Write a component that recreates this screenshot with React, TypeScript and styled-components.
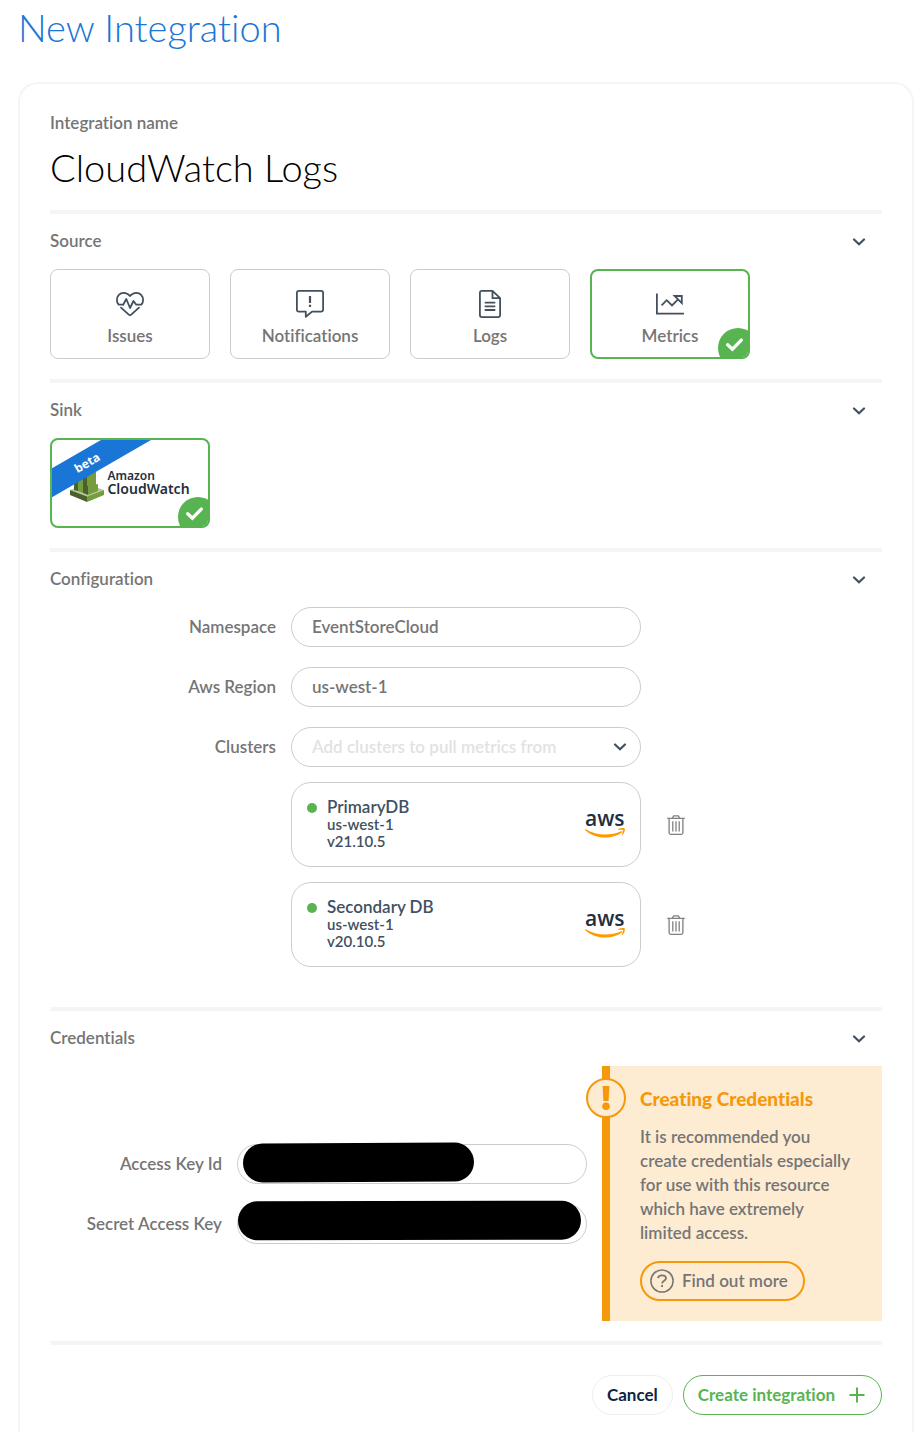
import React, { useState } from "react";
import styled, { createGlobalStyle, css } from "styled-components";

const color = {
  text: "#757575",
  slate: "#42505f",
  navy: "#0d2344",
  blue: "#1a76d6",
  green: "#57b451",
  orange: "#f5980b",
  cream: "#feecd2",
  line: "#cccccc",
  faint: "#f5f5f5",
};

const GlobalStyle = createGlobalStyle`
  *, *::before, *::after { box-sizing: border-box; }
  body {
    margin: 0;
    background: #fff;
    color: ${color.text};
    font: 600 17px/24px Lato, "Open Sans", sans-serif;
    font-variant-ligatures: none;
  }
  button, input, select { font: inherit; font-variant-ligatures: none; color: inherit; margin: 0; }
  svg { display: block; flex: none; }
`;

const Page = styled.main`
  padding: 0 4px 0 18px;
`;

const PageTitle = styled.h1`
  margin: 0 0 28px;
  color: ${color.blue};
  font-size: 38px;
  font-weight: 300;
  line-height: 54px;
`;

const Panel = styled.form`
  padding: 27px 30px 17px;
  border: 2px solid ${color.faint};
  border-bottom: 0;
  border-radius: 20px 20px 0 0;
`;

const NameField = styled.label`
  display: flex;
  flex-direction: column;
`;

const NameInput = styled.input`
  width: 100%;
  height: 64px;
  margin-bottom: 11px;
  padding: 0;
  border: 0;
  outline: 0;
  background: none;
  && { color: #000; font-size: 38px; font-weight: 300; }
`;

const SectionBox = styled.section`
  padding-bottom: 20px;
  border-top: 4px solid ${color.faint};
`;

const SectionHeader = styled.header`
  display: flex;
  align-items: center;
  justify-content: space-between;
  height: 55px;
`;

const SectionTitle = styled.h2`
  margin: 0;
  padding-bottom: 2px;
  font-size: 17px;
  font-weight: 600;
  line-height: 24px;
`;

const Toggle = styled.button`
  padding: 8px 16px;
  border: 0;
  background: none;
  color: ${color.slate};
`;

const Tiles = styled.div`
  display: flex;
  flex-wrap: wrap;
  gap: 20px;
`;

const Tile = styled.button<{ $selected?: boolean }>`
  position: relative;
  display: flex;
  flex-direction: column;
  align-items: center;
  gap: 6px;
  width: 160px;
  height: 90px;
  padding: 20px 0 0;
  overflow: hidden;
  border: 1px solid ${color.line};
  border-radius: 8px;
  background: #fff;
  ${(p) =>
    p.$selected &&
    css`
      padding-top: 19px;
      border: 2px solid ${color.green};
    `}
  svg { color: ${color.slate}; }
`;

const Badge = styled.span`
  position: absolute;
  right: -10px;
  bottom: -11px;
  width: 40px;
  height: 40px;
  padding: 10px 8px;
  border-radius: 50%;
  background: ${color.green};
  && svg { color: #fff; }
`;

const Ribbon = styled.span`
  position: absolute;
  top: 10px;
  left: -45px;
  width: 160px;
  height: 25px;
  background: ${color.blue};
  color: #fff;
  font: 700 12px/25px "Noto Sans", sans-serif;
  text-align: center;
  transform: rotate(-30deg);
`;

const Brand = styled.span`
  display: flex;
  align-items: center;
  gap: 3px;
  margin-top: 5px;
`;

const BrandName = styled.span`
  display: flex;
  flex-direction: column;
  color: #232f3e;
  font: 600 14px/14px "Noto Sans", sans-serif;
  text-align: left;
`;

const BrandSmall = styled.span`
  font-size: 12px;
  line-height: 12px;
`;

const FormGrid = styled.div`
  display: grid;
  grid-template-columns: 1fr 350px 1fr;
  column-gap: 15px;
  row-gap: 20px;
  align-items: center;
  padding-bottom: 20px;
`;

const FieldLabel = styled.label`
  grid-column: 1;
  text-align: right;
`;

const pill = css`
  width: 100%;
  height: 40px;
  padding: 0 20px;
  border: 1px solid ${color.line};
  border-radius: 20px;
  outline: 0;
  background: #fff;
`;

const TextInput = styled.input`
  ${pill}
  padding-bottom: 1px;
`;

const SelectWrap = styled.div`
  position: relative;
  color: ${color.slate};
  svg {
    position: absolute;
    top: 16px;
    right: 14px;
    pointer-events: none;
  }
`;

const SelectInput = styled.select`
  ${pill}
  appearance: none;
  && { color: #e2e2e2; }
`;

const ClusterList = styled.ul`
  display: flex;
  flex-direction: column;
  grid-column: 2 / 4;
  gap: 15px;
  margin: -5px 0 0;
  padding: 0;
  list-style: none;
`;

const ClusterRow = styled.li`
  display: flex;
  align-items: center;
  gap: 18px;
`;

const ClusterCard = styled.div`
  display: flex;
  flex: none;
  gap: 10px;
  width: 350px;
  padding: 14px 15px 16px;
  border: 1px solid ${color.line};
  border-radius: 20px;
  color: ${color.slate};
`;

const Dot = styled.span`
  flex: none;
  width: 10px;
  height: 10px;
  margin-top: 6px;
  border-radius: 50%;
  background: ${color.green};
`;

const ClusterInfo = styled.div`
  display: flex;
  flex: 1;
  flex-direction: column;
  font-size: 15px;
  font-weight: 600;
  line-height: 17px;
`;

const ClusterName = styled.span`
  font-size: 17px;
  font-weight: 600;
  line-height: 19px;
`;

const AwsBox = styled.span`
  height: 42px;
  margin-top: 5px;
`;

const IconButton = styled.button`
  padding: 8px;
  border: 0;
  background: none;
  color: #808080;
`;

const CredentialsRow = styled.div`
  display: flex;
  align-items: center;
  gap: 15px;
`;

const CredentialsGrid = styled.div`
  display: grid;
  flex: 1;
  grid-template-columns: 1fr 350px;
  gap: 20px 15px;
  align-items: center;
`;

const SecretField = styled.div`
  position: relative;
  height: 40px;
`;

const Redaction = styled.span<{ $left: number; $top: number; $right: number; $tilt: number }>`
  position: absolute;
  top: ${(p) => p.$top}px;
  left: ${(p) => p.$left}px;
  right: ${(p) => p.$right}px;
  height: 39px;
  border-radius: 20px;
  background: #000;
  transform: rotate(-${(p) => p.$tilt}deg);
`;

const Notice = styled.aside`
  position: relative;
  width: 280px;
  padding: 20px 30px;
  border-left: 8px solid ${color.orange};
  background: ${color.cream};
`;

const NoticeMark = styled.span`
  position: absolute;
  top: 12px;
  left: -24px;
`;

const NoticeTitle = styled.h3`
  margin: 0 0 13px;
  color: ${color.orange};
  font-size: 19px;
  font-weight: 900;
  line-height: 26px;
`;

const NoticeText = styled.p`
  margin: 0 -6px 16px 0;
`;

const HelpLink = styled.a`
  display: inline-flex;
  align-items: center;
  gap: 8px;
  height: 40px;
  padding: 0 15px 0 8px;
  border: 2px solid ${color.orange};
  border-radius: 20px;
  color: ${color.text};
  text-decoration: none;
  vertical-align: top;
`;

const Footer = styled.footer`
  display: flex;
  justify-content: flex-end;
  gap: 10px;
  padding-top: 30px;
  border-top: 4px solid ${color.faint};
`;

const Action = styled.button<{ $primary?: boolean }>`
  display: flex;
  align-items: center;
  gap: 14px;
  height: 40px;
  padding: 0 ${(p) => (p.$primary ? 16 : 14)}px 0 14px;
  border: 1px solid ${(p) => (p.$primary ? color.green : "#eeeeee")};
  border-radius: 20px;
  background: #fff;
  && {
    color: ${(p) => (p.$primary ? color.green : color.navy)};
    font-weight: 700;
  }
`;

const stroke = { fill: "none", stroke: "currentColor", strokeWidth: 1.8 } as const;

const Chevron = () => (
  <svg width="14" height="8" viewBox="0 0 14 8" aria-hidden="true">
    <path d="M2 1.5 7 6.3 12 1.5" {...stroke} strokeWidth="2.2" strokeLinecap="round" />
  </svg>
);

const HeartIcon = () => (
  <svg width="28" height="28" viewBox="0 0 28 28" {...stroke} strokeLinejoin="round" strokeLinecap="round">
    <path d="M7.2 14.7H2.6C1.4 13.4.9 11.6.9 10 .9 6 3.9 2.8 7.5 2.8c2.7 0 4.9 1 6.5 3.2 1.6-2.2 3.8-3.2 6.5-3.2 3.6 0 6.6 3.2 6.6 7.2 0 1.6-.5 3.4-1.7 4.7H20.3L17.5 11 14 18 10.3 9 7.2 14.7" />
    <path d="M5 17.6 12.8 24.7Q14 25.8 15.2 24.7L23 17.6" />
  </svg>
);

const NoticeIcon = () => (
  <svg width="28" height="28" viewBox="0 0 28 28" {...stroke} strokeLinejoin="round">
    <path d="M3 .9H25Q27.1 .9 27.1 3V19.5Q27.1 21.6 25 21.6H16L9.8 26.8V21.6H3Q.9 21.6 .9 19.5V3Q.9.9 3 .9Z" />
    <path d="M14 6V13M14 14.8V17" strokeWidth="2.2" />
  </svg>
);

const FileIcon = () => (
  <svg width="22" height="28" viewBox="0 0 22 28" {...stroke} strokeLinejoin="round">
    <path d="M13.5.9H3Q.9.9.9 3V25Q.9 27.1 3 27.1H19Q21.1 27.1 21.1 25V8.2L13.5.9V8.2H21.1M5.7 12.7H16.3M5.7 16.3H16.3M5.7 20H16.3" />
  </svg>
);

const ChartIcon = () => (
  <svg width="28" height="28" viewBox="0 0 28 28" {...stroke}>
    <path d="M.9 3.4V23.7H28M5.6 15.3 10.7 10.2 16 15.5 22.3 9.2M18.6 6H25.8V13.2Z" />
  </svg>
);

const Tick = () => (
  <svg width="18" height="14" viewBox="0 0 18 14" aria-hidden="true">
    <path d="M1.7 6.7 6.4 11.1 15.3 2.1" {...stroke} strokeWidth="3.3" strokeLinecap="round" />
  </svg>
);

const CloudWatchMark = () => (
  <svg width="34" height="38" viewBox="0 0 34 38" aria-hidden="true">
    <path d="M0 26 17 20 34 26 17 33Z" fill="#b7ca9d" />
    <path d="M0 26 17 32.5V38L0 31Z" fill="#4b612c" />
    <path d="M34 26 17 32.5V38L34 31Z" fill="#759c3e" />
    <path d="M13 8 19 6V30L13 28Z" fill="#4b612c" />
    <path d="M17 6 26 8V26L17 29Z" fill="#759c3e" />
    <path d="M4 18 8 16V27L4 26Z" fill="#4b612c" />
    <path d="M8 14 13 15V29L8 27Z" fill="#759c3e" />
    <path d="M13 21 18 22V31L13 29Z" fill="#4b612c" />
    <path d="M18 22 28 20V27L18 31Z" fill="#759c3e" />
  </svg>
);

const AwsLogo = () => (
  <svg width="40" height="42" viewBox="0 -7 40 42" overflow="visible" role="img" aria-label="aws">
    <text x="0" y="17" fill="#232f3e" fontFamily="Open Sans, sans-serif" fontSize="21" fontWeight="600">
      aws
    </text>
    <path d="M.6 20.2C11 26.500 24.500 27.300 36.200 22.300 37.300 21.900 37.900 22.800 36.900 23.600 26.500 31 10 30.200.3 21.200-.2 20.600.1 19.900.6 20.200Z" fill="#f90" />
    <path d="M33 20.400C35.400 18.600 39.200 18.800 39.700 19.400 40.200 20.200 39.500 24.100 37.500 26 37.100 26.300 36.800 26.100 36.900 25.700 37.500 24.300 38.300 21.900 37.900 21.100 37.500 20.400 34.900 20.700 33.500 20.900 33 21 32.800 20.700 33 20.400Z" fill="#f90" />
  </svg>
);

const TrashIcon = () => (
  <svg width="18" height="20" viewBox="0 0 18 20" {...stroke} strokeWidth="1.3" aria-hidden="true">
    <path d="M.2 3.3H17.8M5.3 3.1 6.7.9H11.3L12.7 3.1M2.1 3.5V17.8Q2.1 19.3 3.6 19.3H14.4Q15.9 19.3 15.9 17.8V3.5M5.8 6.3V16.6M9 6.3V16.6M12.2 6.3V16.6" />
  </svg>
);

const AlertIcon = () => (
  <svg width="40" height="40" viewBox="0 0 40 40" aria-hidden="true">
    <circle cx="20" cy="20" r="19" fill={color.cream} stroke={color.orange} strokeWidth="2" />
    <path d="M16.6 8H23.4L22.6 23H17.4Z" fill={color.orange} />
    <circle cx="20" cy="28.3" r="3.8" fill={color.orange} />
  </svg>
);

const HelpIcon = () => (
  <svg width="24" height="24" viewBox="0 0 24 24" {...stroke} aria-hidden="true">
    <circle cx="12" cy="12" r="11.1" strokeWidth="1.5" />
    <path d="M8 9.2C8.2 7.4 9.7 6.3 12 6.3 14.4 6.3 16 7.5 16 9.3 16 11.8 12.1 11.7 12.1 14.6M12.1 16V18" />
  </svg>
);

const PlusIcon = () => (
  <svg width="16" height="16" viewBox="0 0 16 16" aria-hidden="true">
    <path d="M8 .5V15.5M.5 8H15.5" {...stroke} strokeWidth="2" />
  </svg>
);

const sources = [
  { name: "Issues", Icon: HeartIcon },
  { name: "Notifications", Icon: NoticeIcon },
  { name: "Logs", Icon: FileIcon },
  { name: "Metrics", Icon: ChartIcon },
];

const clusters = [
  { name: "PrimaryDB", region: "us-west-1", version: "v21.10.5" },
  { name: "Secondary DB", region: "us-west-1", version: "v20.10.5" },
];

function Section({ title, children }: { title: string; children: React.ReactNode }) {
  const [open, setOpen] = useState(true);
  return (
    <SectionBox>
      <SectionHeader>
        <SectionTitle>{title}</SectionTitle>
        <Toggle type="button" aria-label={`Toggle ${title}`} aria-expanded={open} onClick={() => setOpen(!open)}>
          <Chevron />
        </Toggle>
      </SectionHeader>
      {open && children}
    </SectionBox>
  );
}

export default function App() {
  const [source, setSource] = useState("Metrics");
  return (
    <Page>
      <GlobalStyle />
      <PageTitle>New Integration</PageTitle>
      <Panel onSubmit={(e) => e.preventDefault()}>
        <NameField>
          Integration name
          <NameInput defaultValue="CloudWatch Logs" />
        </NameField>

        <Section title="Source">
          <Tiles>
            {sources.map(({ name, Icon }) => (
              <Tile
                key={name}
                type="button"
                $selected={name === source}
                aria-pressed={name === source}
                onClick={() => setSource(name)}
              >
                <Icon />
                {name}
                {name === source && (
                  <Badge>
                    <Tick />
                  </Badge>
                )}
              </Tile>
            ))}
          </Tiles>
        </Section>

        <Section title="Sink">
          <Tiles>
            <Tile type="button" $selected aria-pressed="true">
              <Brand>
                <CloudWatchMark />
                <BrandName>
                  <BrandSmall>Amazon</BrandSmall>
                  CloudWatch
                </BrandName>
              </Brand>
              <Ribbon>beta</Ribbon>
              <Badge>
                <Tick />
              </Badge>
            </Tile>
          </Tiles>
        </Section>

        <Section title="Configuration">
          <FormGrid>
            <FieldLabel htmlFor="namespace">Namespace</FieldLabel>
            <TextInput id="namespace" defaultValue="EventStoreCloud" />
            <FieldLabel htmlFor="region">Aws Region</FieldLabel>
            <TextInput id="region" defaultValue="us-west-1" />
            <FieldLabel htmlFor="clusters">Clusters</FieldLabel>
            <SelectWrap>
              <SelectInput id="clusters" defaultValue="">
                <option value="">Add clusters to pull metrics from</option>
              </SelectInput>
              <Chevron />
            </SelectWrap>
            <ClusterList>
              {clusters.map((c) => (
                <ClusterRow key={c.name}>
                  <ClusterCard>
                    <Dot />
                    <ClusterInfo>
                      <ClusterName>{c.name}</ClusterName>
                      <span>{c.region}</span>
                      <span>{c.version}</span>
                    </ClusterInfo>
                    <AwsBox>
                      <AwsLogo />
                    </AwsBox>
                  </ClusterCard>
                  <IconButton type="button" aria-label={`Remove ${c.name}`}>
                    <TrashIcon />
                  </IconButton>
                </ClusterRow>
              ))}
            </ClusterList>
          </FormGrid>
        </Section>

        <Section title="Credentials">
          <CredentialsRow>
            <CredentialsGrid>
              <FieldLabel htmlFor="key-id">Access Key Id</FieldLabel>
              <SecretField>
                <TextInput id="key-id" />
                <Redaction $left={6} $top={-1} $right={113} $tilt={0.25} />
              </SecretField>
              <FieldLabel htmlFor="secret">Secret Access Key</FieldLabel>
              <SecretField>
                <TextInput id="secret" />
                <Redaction $left={1} $top={-3} $right={6} $tilt={0.1} />
              </SecretField>
            </CredentialsGrid>
            <Notice>
              <NoticeMark>
                <AlertIcon />
              </NoticeMark>
              <NoticeTitle>Creating Credentials</NoticeTitle>
              <NoticeText>
                It is recommended you create credentials especially for use with this resource which have extremely
                limited access.
              </NoticeText>
              <HelpLink href="#credentials-help">
                <HelpIcon />
                Find out more
              </HelpLink>
            </Notice>
          </CredentialsRow>
        </Section>

        <Footer>
          <Action type="button">Cancel</Action>
          <Action type="submit" $primary>
            Create integration
            <PlusIcon />
          </Action>
        </Footer>
      </Panel>
    </Page>
  );
}
